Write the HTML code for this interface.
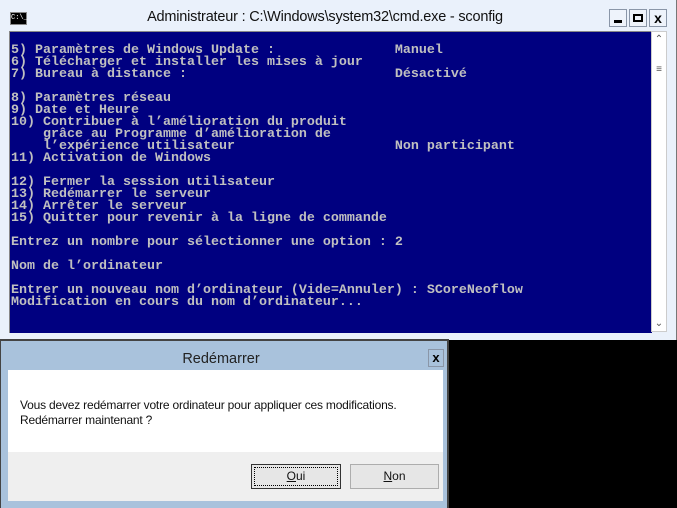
<!DOCTYPE html>
<html><head><meta charset="utf-8"><style>
body{margin:0;width:677px;height:508px;overflow:hidden;background:#000;position:relative;font-family:"Liberation Sans",sans-serif}
.win{position:absolute;left:0;top:0;width:676px;height:340px;background:#eaf1fb;border-right:1px solid #777}
.title{position:absolute;left:0;top:9px;width:650px;text-align:center;font-size:14.5px;color:#111;letter-spacing:-0.2px}
.icon{position:absolute;left:10px;top:12px;width:15px;height:11px;background:#000;border:1px solid #888;color:#fff;font-size:7px;line-height:11px;font-family:"Liberation Mono",monospace}
.btn{position:absolute;top:9px;width:16px;height:16px;border:1px solid #8a96a8;background:#eef3fb}
.con{position:absolute;left:9px;top:31px;width:642px;height:301px;background:#000080;border-left:1px solid #888;border-top:1px solid #888}
pre{margin:0;position:absolute;left:1px;top:13px;font-family:"Liberation Mono",monospace;font-size:13.33px;line-height:12px;color:#c0c0c0;font-weight:bold;letter-spacing:0}
.sb{position:absolute;left:651px;top:31px;width:16px;height:301px;background:#fff;border:1px solid #ccc;box-sizing:border-box}
.dlg{position:absolute;left:0;top:339px;width:449px;height:169px;background:#a9c2dc;border-top:2px solid #444;border-right:2px solid #444;border-left:1px solid #444;box-sizing:border-box}
.dt{position:absolute;left:0;width:440px;top:10px;text-align:center;font-size:14.5px;color:#222}
.dx{position:absolute;left:427px;top:8px;width:14px;height:16px;border:1px solid #8a96a8;font-weight:bold;font-size:13px;text-align:center;line-height:16px}
.wh{position:absolute;left:7px;top:29px;width:435px;height:82px;background:#fff}
.msg{position:absolute;left:12px;top:28px;font-size:12px;line-height:15px;color:#111;letter-spacing:-0.2px}
.gr{position:absolute;left:7px;top:111px;width:435px;height:49px;background:#efefef}
.b{position:absolute;top:12px;height:23px;border:1px solid #adadad;background:#e6e6e6;font-size:12px;text-align:center;line-height:23px;color:#111}
</style></head><body>
<div class="win">
<div class="icon">C:\_</div>
<div class="title">Administrateur : C:\Windows\system32\cmd.exe - sconfig</div>
<div class="btn" style="left:609px"><div style="position:absolute;left:4px;top:10px;width:8px;height:3px;background:#000"></div></div>
<div class="btn" style="left:629px"><div style="position:absolute;left:3px;top:4px;width:6px;height:4px;border:2px solid #000"></div></div>
<div class="btn" style="left:649px;font-weight:bold;font-size:14px;text-align:center;line-height:16px">x</div>
<div class="con"><pre>5) Paramètres de Windows Update :               Manuel
6) Télécharger et installer les mises à jour
7) Bureau à distance :                          Désactivé

8) Paramètres réseau
9) Date et Heure
10) Contribuer à l’amélioration du produit
    grâce au Programme d’amélioration de
    l’expérience utilisateur                    Non participant
11) Activation de Windows

12) Fermer la session utilisateur
13) Redémarrer le serveur
14) Arrêter le serveur
15) Quitter pour revenir à la ligne de commande

Entrez un nombre pour sélectionner une option : 2

Nom de l’ordinateur

Entrer un nouveau nom d’ordinateur (Vide=Annuler) : SCoreNeoflow
Modification en cours du nom d’ordinateur...</pre></div>
<div class="sb"><div style="text-align:center;font-size:10px;color:#555;margin-top:2px">&#8963;</div><div style="position:absolute;top:32px;left:2px;width:10px;font-size:10px;text-align:center;color:#555">&#8801;</div><div style="position:absolute;bottom:2px;width:14px;text-align:center;font-size:10px;color:#555">&#8964;</div></div>
</div>
<div class="dlg">
<div class="dt">Redémarrer</div>
<div class="dx">x</div>
<div class="wh"><div class="msg">Vous devez redémarrer votre ordinateur pour appliquer ces modifications.<br>Redémarrer maintenant ?</div></div>
<div class="gr">
<div class="b" style="left:243px;width:88px;border:1px solid #333;outline:1px dotted #000;outline-offset:-4px"><u>O</u>ui</div>
<div class="b" style="left:342px;width:87px"><u>N</u>on</div>
</div>
</div>
</body></html>
